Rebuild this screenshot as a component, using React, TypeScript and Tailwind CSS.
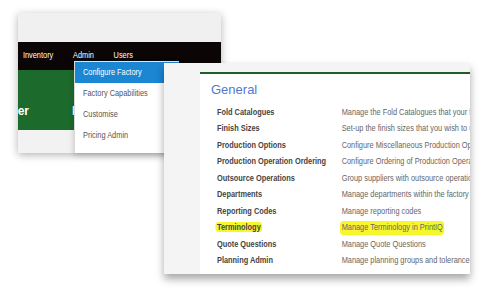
import React from "react";

const rows = [
  ["Fold Catalogues", "Manage the Fold Catalogues that your factory uses"],
  ["Finish Sizes", "Set-up the finish sizes that you wish to use"],
  ["Production Options", "Configure Miscellaneous Production Options"],
  ["Production Operation Ordering", "Configure Ordering of Production Operations"],
  ["Outsource Operations", "Group suppliers with outsource operations"],
  ["Departments", "Manage departments within the factory"],
  ["Reporting Codes", "Manage reporting codes"],
  ["Terminology", "Manage Terminology in PrintIQ"],
  ["Quote Questions", "Manage Quote Questions"],
  ["Planning Admin", "Manage planning groups and tolerances"],
];

const menu = ["Configure Factory", "Factory Capabilities", "Customise", "Pricing Admin"];

export default function App() {
  return (
    <div className="relative w-[500px] h-[300px] overflow-hidden bg-white font-['Liberation_Sans',Arial,sans-serif]">
      {/* back window: main nav */}
      <div className="absolute left-[18px] top-[13px] w-[203px] h-[140px] flex flex-col overflow-hidden shadow-[0_2px_8px_rgba(0,0,0,0.3)]">
        <div className="h-[29px] bg-[#f0f0f0]" />
        <div className="h-[28px] bg-[#0b0505] flex items-center pb-[1px]">
          <div className="flex gap-[24px] pl-[6px] text-[9px] text-white origin-left scale-x-[0.82] whitespace-nowrap">
            <span>Inventory</span>
            <span>Admin</span>
            <span>Users</span>
          </div>
        </div>
        <div className="h-[60px] bg-[#1c6a2c] flex items-end pb-[10px] text-[12px] font-bold text-white whitespace-nowrap">
          <span className="-ml-[45px]">Customer</span>
          <span className="ml-[43px]">Dashboard</span>
        </div>
        <div className="flex-1 bg-[#f2f2f2]" />
      </div>

      {/* admin dropdown */}
      <div className="absolute left-[74px] top-[61px] w-[105px] h-[92px] bg-white border-t border-[#d6e8f6] border-l border-l-[#d8d8d8] shadow-[0_2px_6px_rgba(0,0,0,0.2)] text-[9px] text-[#555]">
        {menu.map((m, i) => (
          <div
            key={m}
            className={`h-[21px] flex items-center pl-[8px] whitespace-nowrap ${i === 0 ? "bg-[#1b86d2] text-white" : ""}`}
          >
            <span className="inline-block origin-left scale-x-[0.82]">{m}</span>
          </div>
        ))}
      </div>

      {/* front window: configure factory */}
      <div className="absolute left-[164px] top-[63px] w-[306px] h-[211px] bg-[#f4f4f4] pl-[36px] pt-[9px] flex shadow-[0_5px_8px_rgba(0,0,0,0.35)]">
        <div className="flex-1 bg-white border-t-2 border-[#1f5e2b] overflow-hidden">
          <div className="pl-[11px] pt-[8px] text-[13px] leading-[15px] text-[#4d7bd0]">
            General
          </div>
          <div className="mt-[7px] ml-[17px] w-[400px] origin-left scale-x-[0.82]">
            {rows.map(([label, desc]) => {
              const hl = label === "Terminology";
              return (
                <div key={label} className="h-[16.5px] flex items-center text-[9px] whitespace-nowrap">
                  <div className="w-[152px] shrink-0">
                    <span className={`font-bold text-[#444] ${hl ? "bg-[#f6f62c] rounded-sm px-[2px] -mx-[2px]" : ""}`}>
                      {label}
                    </span>
                  </div>
                  <span className={`text-[#666] ${hl ? "bg-[#f6f62c] rounded-sm px-[2px] -mx-[2px] text-[#333]" : ""}`}>
                    {desc}
                  </span>
                </div>
              );
            })}
          </div>
        </div>
      </div>
    </div>
  );
}
